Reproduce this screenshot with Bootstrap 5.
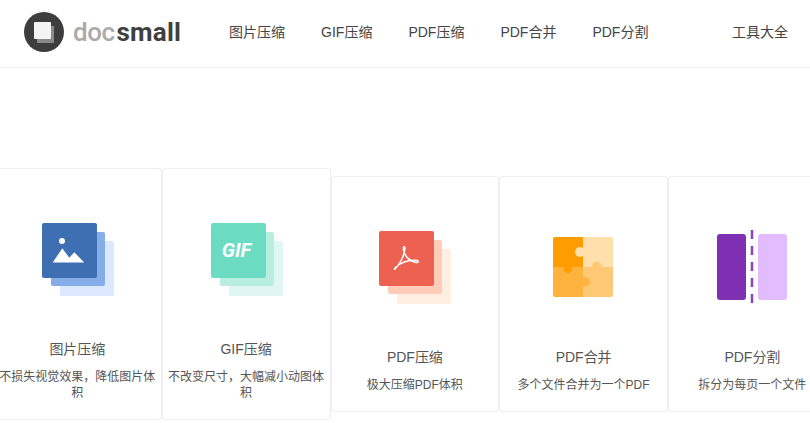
<!DOCTYPE html>
<html lang="zh-CN">
<head>
  <meta charset="UTF-8">
  <title>docsmall</title>
  <link href="https://cdn.jsdelivr.net/npm/bootstrap@5.3.0/dist/css/bootstrap.min.css" rel="stylesheet">
  <style>
    body { font-family: "Liberation Sans", "Noto Sans CJK SC", sans-serif; color: #555; overflow-x: hidden; }
    .top-bar { height: 68px; padding: 0 22px 3px 24px; border-bottom: 1px solid #eee; }
    .logo-link { display: flex; align-items: center; gap: 9px; padding: 0; margin: 0 30px 0 0; font-family: Roboto, sans-serif; font-size: 26px; line-height: 40px; }
    .logo-doc { color: #aaa; font-weight: 500; letter-spacing: -.5px; }
    .logo-small { color: #3f3f3f; font-weight: 700; margin-left: 2px; letter-spacing: .2px; }
    .top-bar .navbar-nav .nav-link { padding: 0 18px; font-size: 14px; line-height: 20px; color: #444; }
    .top-bar .tools-link { padding: 0; font-size: 14px; line-height: 20px; color: #444; }
    .tool-row { width: 844px; margin: 100px 0 0 -7px; }
    .tool-card { flex: 0 0 168.75px; padding: 53px 5px 18px; border: 1px solid #eee; border-radius: 3px; text-align: center; }
    .tool-card svg { display: block; margin: 0 auto; }
    .tool-title { margin: 41px 0 10px; font-size: 14px; line-height: 20px; color: #555; }
    .tool-desc { margin: 0; font-size: 12px; line-height: 16px; color: #555; }
  </style>
</head>
<body class="bg-white">
  <nav class="navbar navbar-expand top-bar bg-white">
    <a class="navbar-brand logo-link" href="#">
      <svg width="40" height="40" viewBox="0 0 40 40">
        <circle cx="20" cy="20" r="20" fill="#3d3d3d"/>
        <rect x="13" y="14" width="17" height="17" rx="1" fill="#8a8a8a"/>
        <rect x="10" y="10" width="17" height="17" rx="1" fill="#f4f4f4"/>
      </svg>
      <span><span class="logo-doc">doc</span><span class="logo-small">small</span></span>
    </a>
    <ul class="navbar-nav me-auto">
      <li class="nav-item"><a class="nav-link" href="#">图片压缩</a></li>
      <li class="nav-item"><a class="nav-link" href="#">GIF压缩</a></li>
      <li class="nav-item"><a class="nav-link" href="#">PDF压缩</a></li>
      <li class="nav-item"><a class="nav-link" href="#">PDF合并</a></li>
      <li class="nav-item"><a class="nav-link" href="#">PDF分割</a></li>
    </ul>
    <a class="nav-link tools-link" href="#">工具大全</a>
  </nav>

  <main class="d-flex align-items-center tool-row">
    <div class="tool-card">
      <svg width="76" height="76" viewBox="-3 -1 76 76">
        <rect x="18" y="18" width="54" height="55" rx="2" fill="#dbe8ff"/>
        <rect x="9" y="9" width="54" height="54" rx="2" fill="#85ade8"/>
        <rect width="55" height="55" rx="2" fill="#3e6fb3"/>
        <circle cx="20" cy="18" r="3" fill="#fff"/>
        <path d="M10.7 39.5 20.3 25.3 27.3 34.7 32.3 29.3 42.3 39.5Z" fill="#fff"/>
      </svg>
      <div class="tool-title">图片压缩</div>
      <p class="tool-desc">不损失视觉效果，降低图片体积</p>
    </div>
    <div class="tool-card">
      <svg width="76" height="76" viewBox="-3 -1 76 76">
        <rect x="18" y="18" width="54" height="55" rx="2" fill="#e0f7f1"/>
        <rect x="9" y="9" width="54" height="54" rx="2" fill="#b9eddf"/>
        <rect width="55" height="55" rx="2" fill="#6bdcc2"/>
        <text x="25.500" y="34" text-anchor="middle" font-family="Roboto, sans-serif" font-size="20" font-weight="700" font-style="italic" fill="#fff">GIF</text>
      </svg>
      <div class="tool-title">GIF压缩</div>
      <p class="tool-desc">不改变尺寸，大幅减小动图体积</p>
    </div>
    <div class="tool-card">
      <svg width="76" height="76" viewBox="-2 -1 76 76">
        <rect x="18" y="18" width="54" height="55" rx="2" fill="#ffeee2"/>
        <rect x="9" y="9" width="54" height="54" rx="2" fill="#ffccb9"/>
        <rect width="55" height="55" rx="2" fill="#ed6150"/>
        <path d="M16 38C20 34 25 26 25.800 18C26 15 24.200 15 24.400 18C24.800 24 30 30 37 31.500C40 32 40 29.500 37 29.300C30 28.800 22 31.500 17 36C15 37.500 15 39 16 38Z" fill="none" stroke="#fff" stroke-width="1.500"/>
      </svg>
      <div class="tool-title">PDF压缩</div>
      <p class="tool-desc">极大压缩PDF体积</p>
    </div>
    <div class="tool-card">
      <svg width="76" height="76" viewBox="-7 -7 76 76">
        <path d="M30 0H58a2 2 0 0 1 2 2V30H30Z" fill="#ffdfac"/>
        <path d="M30 30H60V58a2 2 0 0 1-2 2H30Z" fill="#ffc875"/>
        <path d="M0 30H30V60H2a2 2 0 0 1-2-2Z" fill="#ffb33f"/>
        <circle cx="32.500" cy="45" r="4.500" fill="#ffb33f"/>
        <circle cx="43.700" cy="29" r="4.500" fill="#ffc875"/>
        <path d="M2 0H30V30H0V2a2 2 0 0 1 2-2Z" fill="#ff9d00"/>
        <circle cx="15" cy="31.500" r="4.500" fill="#ff9d00"/>
        <circle cx="27" cy="15" r="5" fill="#ffdfac"/>
      </svg>
      <div class="tool-title">PDF合并</div>
      <p class="tool-desc">多个文件合并为一个PDF</p>
    </div>
    <div class="tool-card">
      <svg width="76" height="76" viewBox="-3 0 76 76">
        <rect y="4" width="29" height="66" rx="3" fill="#7f2fb1"/>
        <rect x="41" y="4" width="29" height="66" rx="3" fill="#e2bcff"/>
        <path d="M35 0V74" stroke="#8d42c0" stroke-width="2.500" stroke-dasharray="9 7"/>
      </svg>
      <div class="tool-title">PDF分割</div>
      <p class="tool-desc">拆分为每页一个文件</p>
    </div>
  </main>
  <script src="https://cdn.jsdelivr.net/npm/bootstrap@5.3.0/dist/js/bootstrap.bundle.min.js"></script>
</body>
</html>
